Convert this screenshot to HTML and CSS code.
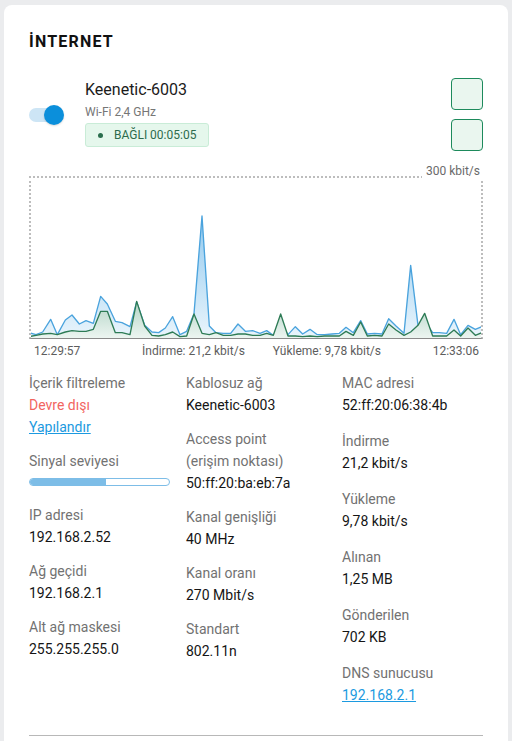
FILE: index.html
```html
<!DOCTYPE html>
<html lang="tr">
<head>
  <meta charset="UTF-8">
  <title>İnternet</title>
  <link rel="stylesheet" href="styles.css">
</head>
<body>

<div class="card">
  <h2 class="card-title">İNTERNET</h2>

  <div class="conn">
    <div class="toggle"><span class="knob"></span></div>
    <div class="conn-info">
      <div class="conn-name">Keenetic-6003</div>
      <div class="conn-band">Wi-Fi 2,4 GHz</div>
      <div class="status"><span class="status-dot"></span>BAĞLI 00:05:05</div>
    </div>
    <div class="conn-actions">
      <button class="icon-btn"></button>
      <button class="icon-btn"></button>
    </div>
  </div>

  <div class="chart">
    <span class="chart-max">300 kbit/s</span>
    <div class="chart-box">
      <svg class="chart-svg" viewBox="33 48 1350 480" preserveAspectRatio="none">
        <defs>
          <linearGradient id="rxFill" gradientUnits="userSpaceOnUse" x1="0" y1="150" x2="0" y2="531">
            <stop offset="0" stop-color="#8fc8ee"/>
            <stop offset="1" stop-color="#eaf5fc"/>
          </linearGradient>
          <linearGradient id="txFill" gradientUnits="userSpaceOnUse" x1="0" y1="400" x2="0" y2="531">
            <stop offset="0" stop-color="#a9cfbf"/>
            <stop offset="1" stop-color="#eef6f2"/>
          </linearGradient>
        </defs>
        <!-- download -->
        <polygon fill="url(#rxFill)" points="27,512 48,518 68,510 92,472 112,518 136,474 156,459 178,486 198,476 220,484 242,403 262,426 286,478 306,482 330,494 350,420 374,490 396,510 416,512 436,498 458,464 480,518 500,508 522,455 546,162 568,492 588,512 610,514 632,514 654,486 676,508 698,506 720,514 740,506 760,520 782,484 804,518 826,494 848,516 870,502 892,518 914,518 936,516 958,514 978,496 1000,512 1022,476 1042,516 1064,514 1086,516 1106,470 1128,492 1152,514 1172,310 1194,490 1214,478 1238,512 1258,512 1280,514 1302,472 1322,518 1344,490 1366,502 1386,494 1386,531 27,531"/>
        <polyline class="line-rx" points="27,512 48,518 68,510 92,472 112,518 136,474 156,459 178,486 198,476 220,484 242,403 262,426 286,478 306,482 330,494 350,420 374,490 396,510 416,512 436,498 458,464 480,518 500,508 522,455 546,162 568,492 588,512 610,514 632,514 654,486 676,508 698,506 720,514 740,506 760,520 782,484 804,518 826,494 848,516 870,502 892,518 914,518 936,516 958,514 978,496 1000,512 1022,476 1042,516 1064,514 1086,516 1106,470 1128,492 1152,514 1172,310 1194,490 1214,478 1238,512 1258,512 1280,514 1302,472 1322,518 1344,490 1366,502 1386,494"/>
        <!-- upload -->
        <polygon fill="url(#txFill)" points="27,524 48,520 68,516 92,514 112,518 136,510 156,506 178,508 198,508 220,502 242,448 262,448 286,512 306,512 330,518 350,418 374,492 396,520 416,522 436,518 458,510 480,524 500,522 522,456 546,514 568,518 588,512 610,520 632,520 654,516 676,516 698,520 720,520 740,514 760,520 782,456 804,522 826,522 848,524 870,522 892,524 914,522 936,522 958,522 978,508 1000,520 1022,480 1042,522 1064,520 1086,522 1106,486 1128,504 1152,520 1172,510 1194,490 1214,454 1238,522 1258,522 1280,522 1302,504 1322,522 1344,498 1366,520 1386,512 1386,531 27,531"/>
        <polyline class="line-tx" points="27,524 48,520 68,516 92,514 112,518 136,510 156,506 178,508 198,508 220,502 242,448 262,448 286,512 306,512 330,518 350,418 374,492 396,520 416,522 436,518 458,510 480,524 500,522 522,456 546,514 568,518 588,512 610,520 632,520 654,516 676,516 698,520 720,520 740,514 760,520 782,456 804,522 826,522 848,524 870,522 892,524 914,522 936,522 958,522 978,508 1000,520 1022,480 1042,522 1064,520 1086,522 1106,486 1128,504 1152,520 1172,510 1194,490 1214,454 1238,522 1258,522 1280,522 1302,504 1322,522 1344,498 1366,520 1386,512"/>
      </svg>
    </div>
    <div class="chart-legend">
      <span>12:29:57</span>
      <div class="legend-mid">
        <span>İndirme: 21,2 kbit/s</span>
        <span>Yükleme: 9,78 kbit/s</span>
      </div>
      <span>12:33:06</span>
    </div>
  </div>

  <div class="details">
    <div class="col">
      <div class="item">
        <div class="label">İçerik filtreleme</div>
        <div class="value off">Devre dışı</div>
        <a href="#" class="link">Yapılandır</a>
      </div>
      <div class="item">
        <div class="label">Sinyal seviyesi</div>
        <div class="signal"><div class="signal-bar"><div class="signal-fill" style="width:55%"></div></div></div>
      </div>
      <div class="item">
        <div class="label">IP adresi</div>
        <div class="value">192.168.2.52</div>
      </div>
      <div class="item">
        <div class="label">Ağ geçidi</div>
        <div class="value">192.168.2.1</div>
      </div>
      <div class="item">
        <div class="label">Alt ağ maskesi</div>
        <div class="value">255.255.255.0</div>
      </div>
    </div>

    <div class="col">
      <div class="item">
        <div class="label">Kablosuz ağ</div>
        <div class="value">Keenetic-6003</div>
      </div>
      <div class="item">
        <div class="label">Access point<br>(erişim noktası)</div>
        <div class="value">50:ff:20:ba:eb:7a</div>
      </div>
      <div class="item">
        <div class="label">Kanal genişliği</div>
        <div class="value">40 MHz</div>
      </div>
      <div class="item">
        <div class="label">Kanal oranı</div>
        <div class="value">270 Mbit/s</div>
      </div>
      <div class="item">
        <div class="label">Standart</div>
        <div class="value">802.11n</div>
      </div>
    </div>

    <div class="col col-wide">
      <div class="item">
        <div class="label">MAC adresi</div>
        <div class="value">52:ff:20:06:38:4b</div>
      </div>
      <div class="item">
        <div class="label">İndirme</div>
        <div class="value">21,2 kbit/s</div>
      </div>
      <div class="item">
        <div class="label">Yükleme</div>
        <div class="value">9,78 kbit/s</div>
      </div>
      <div class="item">
        <div class="label">Alınan</div>
        <div class="value">1,25 MB</div>
      </div>
      <div class="item">
        <div class="label">Gönderilen</div>
        <div class="value">702 KB</div>
      </div>
      <div class="item">
        <div class="label">DNS sunucusu</div>
        <a href="#" class="link">192.168.2.1</a>
      </div>
    </div>
  </div>

  <div class="divider"></div>
</div>

</body>
</html>
```

FILE: styles.css
```css
body {
  margin: 0;
  background: #ebecee;
  font-family: Roboto, "Liberation Sans", Arial, sans-serif;
  color: #1b1b1b;
}
.card {
  background: #fff;
  margin: 5px 4px 0 4px;
  padding: 27px 25px 20px 25px;
  border-radius: 8px 8px 0 0;
  min-height: 760px;
  box-sizing: border-box;
}
.card-title {
  margin: 0;
  font-size: 16px;
  line-height: 20px;
  font-weight: 700;
  letter-spacing: 1.2px;
  color: #111;
}

/* connection header */
.conn {
  display: flex;
  align-items: center;
  margin-top: 26px;
}
.toggle {
  position: relative;
  width: 36px;
  height: 14px;
  flex: none;
}
.toggle::before {
  content: "";
  position: absolute;
  left: 0;
  top: 0;
  width: 26px;
  height: 14px;
  border-radius: 7px;
  background: #cde5f5;
}
.knob {
  position: absolute;
  left: 15px;
  top: -3px;
  width: 20px;
  height: 20px;
  border-radius: 50%;
  background: #0b8fdb;
  box-shadow: 0 1px 2px rgba(0,0,0,0.15);
}
.conn-info {
  flex: 1;
  margin-left: 20px;
  padding-top: 2px;
  align-self: flex-start;
}
.conn-name {
  font-size: 16px;
  line-height: 20px;
}
.conn-band {
  font-size: 12px;
  line-height: 16px;
  margin-top: 4px;
  color: #767676;
}
.status {
  display: inline-flex;
  align-items: center;
  margin-top: 3px;
  height: 24px;
  box-sizing: border-box;
  padding: 0 12px 0 12px;
  font-size: 12px;
  color: #2d6b4d;
  background: #e5f7ec;
  border: 1px solid #c9ecd7;
  border-radius: 3px;
}
.status-dot {
  width: 5px;
  height: 5px;
  border-radius: 50%;
  background: #2a6e4d;
  margin-right: 11px;
}
.conn-actions {
  display: flex;
  flex-direction: column;
  gap: 9px;
}
.icon-btn {
  width: 32px;
  height: 32px;
  padding: 0;
  border: 1.5px solid #1d8a5c;
  border-radius: 4px;
  background: #eaf6ef;
}

/* traffic chart */
.chart {
  position: relative;
  margin-top: 25px;
}
.chart-max {
  position: absolute;
  right: 0;
  top: -12px;
  padding: 0 3px 0 4px;
  background: #fff;
  font-size: 12px;
  line-height: 14px;
  color: #6a6a6a;
}
.chart-box {
  border: 2px dotted #bdbdbd;
  border-bottom: 1px solid #8a8a8a;
  height: 160px;
}
.chart-svg {
  display: block;
  width: 100%;
  height: 160px;
}
.line-rx {
  fill: none;
  stroke: #4aa3dd;
  stroke-width: 4;
  stroke-linejoin: round;
}
.line-tx {
  fill: none;
  stroke: #2d7b55;
  stroke-width: 4;
  stroke-linejoin: round;
}
.chart-legend {
  display: flex;
  margin-top: 4px;
  padding: 0 4px 0 5px;
  font-size: 12px;
  line-height: 16px;
  color: #5d5d5d;
}
.legend-mid {
  flex: 1;
  display: flex;
  justify-content: center;
  gap: 28px;
  padding-left: 10px;
}

/* details */
.details {
  display: grid;
  grid-template-columns: 157px 156px 1fr;
  margin-top: 13px;
}
.item {
  margin-bottom: 12px;
}
.col-wide .item {
  margin-bottom: 14px;
}
.label {
  font-size: 14px;
  line-height: 22px;
  color: #727272;
}
.value {
  font-size: 14px;
  line-height: 22px;
  color: #151515;
}
.value.off {
  color: #f2655f;
}
.link {
  display: inline-block;
  font-size: 14px;
  line-height: 22px;
  color: #1c9ae0;
  text-decoration: underline;
}
.signal {
  padding: 6px 0;
}
.signal-bar {
  width: 141px;
  height: 8px;
  box-sizing: border-box;
  border: 1px solid #7dbde7;
  border-radius: 4px;
  overflow: hidden;
}
.signal-fill {
  height: 100%;
  background: #7dbde7;
}
.divider {
  margin-top: 15px;
  border-top: 1px solid #b8b8b8;
}
```
